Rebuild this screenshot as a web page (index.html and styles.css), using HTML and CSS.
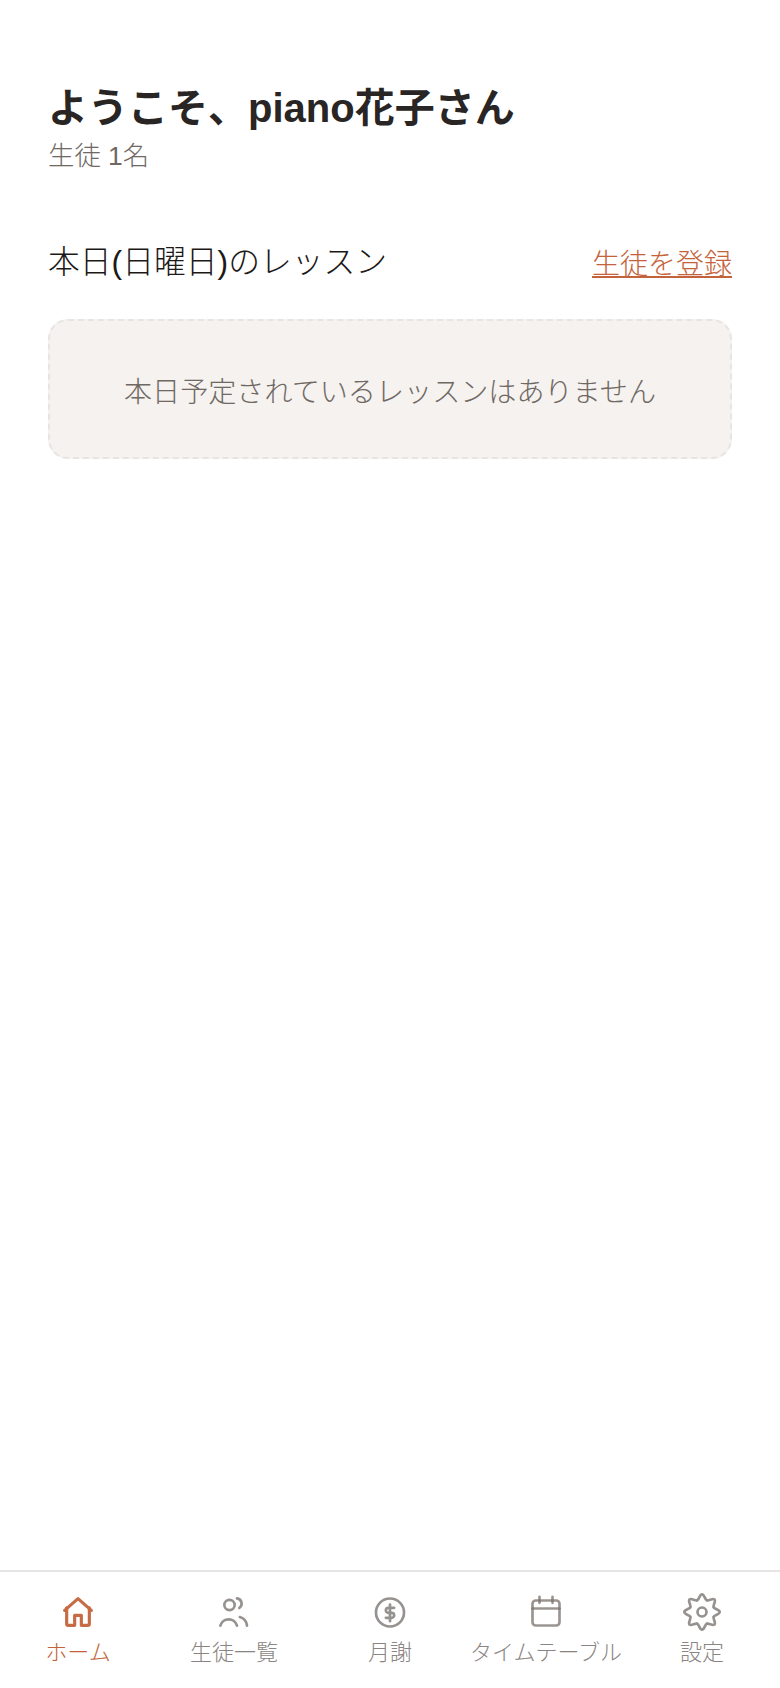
FILE: index.html
```html
<!DOCTYPE html>
<html lang="ja">
<head>
    <meta charset="utf-8">
    <title>ホーム</title>
    <link rel="stylesheet" href="styles.css">
</head>
<body>
    <main class="page">
        <h1 class="welcome">ようこそ、piano花子さん</h1>
        <p class="student-count">生徒 1名</p>

        <div class="section-head">
            <h2 class="section-title">本日(日曜日)のレッスン</h2>
            <a class="register-link" href="#">生徒を登録</a>
        </div>

        <div class="empty-box">本日予定されているレッスンはありません</div>
    </main>

    <nav class="tab-bar">
        <a class="tab tab-active" href="#">
            <svg class="tab-icon" viewBox="0 0 24 24"><path d="M4 11l8-7 8 7"/><path d="M5.200 9.500V19a1 1 0 0 0 1 1H10v-6h4v6h3.800a1 1 0 0 0 1-1V9.500"/></svg>
            <span>ホーム</span>
        </a>
        <a class="tab" href="#">
            <svg class="tab-icon" viewBox="0 0 24 24"><circle cx="9.300" cy="7.800" r="3.100"/><path d="M13.800 3.800a3.200 3.200 0 0 1 1.400 5.800"/><path d="M3.800 20.200a5.200 5.200 0 0 1 10 0"/><path d="M15.500 15a6 6 0 0 1 4.300 5.200"/></svg>
            <span>生徒一覧</span>
        </a>
        <a class="tab" href="#">
            <svg class="tab-icon" viewBox="0 0 24 24"><circle cx="12" cy="12.300" r="8.400"/><path d="M14.500 9.500H11a1.500 1.500 0 0 0 0 3h2a1.500 1.500 0 0 1 0 3H9.500"/><path d="M12 7.500v10"/></svg>
            <span>月謝</span>
        </a>
        <a class="tab" href="#">
            <svg class="tab-icon tab-icon-overlap" viewBox="0 0 24 24"><rect x="3.900" y="5.100" width="16.200" height="15" rx="2"/><path d="M3.900 9.900h16.200"/><path d="M8.100 2.900v3.600M15.900 2.900v3.600"/></svg>
            <span>タイムテーブル</span>
        </a>
        <a class="tab" href="#">
            <svg class="tab-icon" viewBox="0 0 24 24">
                <circle cx="12" cy="12" r="2.700"/>
                <path id="gear-tooth" d="M9.090 4.980C10.380 4.440 10.500 1.400 12 1.400S13.620 4.440 14.910 4.980"/>
                <use href="#gear-tooth" transform="rotate(45 12 12)"/>
                <use href="#gear-tooth" transform="rotate(90 12 12)"/>
                <use href="#gear-tooth" transform="rotate(135 12 12)"/>
                <use href="#gear-tooth" transform="rotate(180 12 12)"/>
                <use href="#gear-tooth" transform="rotate(225 12 12)"/>
                <use href="#gear-tooth" transform="rotate(270 12 12)"/>
                <use href="#gear-tooth" transform="rotate(315 12 12)"/>
            </svg>
            <span>設定</span>
        </a>
    </nav>
</body>
</html>
```
FILE: styles.css
```css
* {
    box-sizing: border-box;
}

body {
    margin: 0;
    height: 1688px;
    display: flex;
    flex-direction: column;
    background-color: #ffffff;
    color: #1c1917;
    font-family: "Liberation Sans", "Noto Sans CJK JP", sans-serif;
    font-weight: 300;
}

.page {
    flex: 1;
    padding: 82px 48px 0;
}

.welcome {
    margin: 0;
    font-size: 40px;
    line-height: 52px;
    font-weight: 700;
    color: #292524;
}

.student-count {
    margin: 3px 0 0;
    font-size: 26.4px;
    line-height: 38px;
    color: #6f6863;
}

.section-head {
    display: flex;
    justify-content: space-between;
    align-items: center;
    margin-top: 63px;
}

.section-title {
    margin: 0;
    font-size: 31.8px;
    line-height: 48px;
    font-weight: 300;
}

.register-link {
    font-size: 28px;
    color: #c4633b;
}

.empty-box {
    margin-top: 33px;
    height: 140px;
    display: flex;
    align-items: center;
    justify-content: center;
    background-color: #f5f2ef;
    border: 2px dashed #e7e5e4;
    border-radius: 20px;
    font-size: 28.1px;
    color: #6f6863;
}

.tab-bar {
    display: grid;
    grid-template-columns: repeat(5, 1fr);
    height: 118px;
    padding-top: 20px;
    border-top: 2px solid #e7e5e4;
}

.tab {
    display: flex;
    flex-direction: column;
    align-items: center;
    gap: 6px;
    color: #8a8582;
    font-size: 22px;
    line-height: 30px;
    text-decoration: none;
    white-space: nowrap;
}

.tab-active {
    color: #c4633b;
}

.tab-icon {
    width: 40px;
    height: 40px;
    fill: none;
    stroke: #969290;
    stroke-width: 1.6;
    stroke-linecap: round;
    stroke-linejoin: round;
}

.tab-active .tab-icon {
    stroke: #c76b45;
    stroke-width: 1.9;
}

/* calendar lines look darker where they cross the frame */
.tab-icon-overlap {
    stroke: #78716c;
    stroke-opacity: 0.75;
}
```
